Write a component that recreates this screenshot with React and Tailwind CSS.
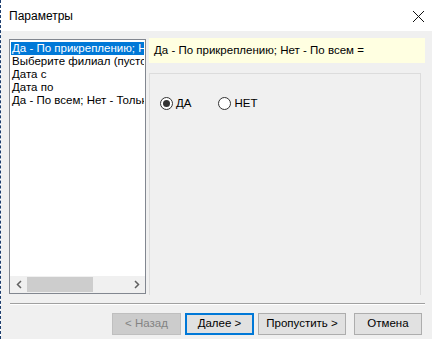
import React, { useState } from 'react';

const items = [
  'Да - По прикреплению; Нет - По всем =',
  'Выберите филиал (пусто - все)',
  'Дата с',
  'Дата по',
  'Да - По всем; Нет - Только свои',
];

const Radio = ({ checked, label, onClick }) => (
  <button type="button" onClick={onClick} className="flex items-center gap-[3px]">
    <span className="w-[13px] h-[13px] rounded-full border border-[#333333] bg-white flex items-center justify-center">
      {checked && <span className="w-[7px] h-[7px] rounded-full bg-[#333333]"></span>}
    </span>
    <span className="text-[11.5px] leading-[13px] text-black">{label}</span>
  </button>
);

const Button = ({ children, disabled, primary, className = '' }) => (
  <button
    type="button"
    disabled={disabled}
    className={`h-[22px] text-[11.5px] flex items-center justify-center ${
      disabled
        ? 'bg-[#cccccc] border border-[#bfbfbf] text-[#838383]'
        : primary
        ? 'bg-[#e1e1e1] border-2 border-[#0078d7] text-black'
        : 'bg-[#e1e1e1] border border-[#adadad] text-black'
    } ${className}`}
  >
    {children}
  </button>
);

const App = () => {
  const [selected, setSelected] = useState(0);
  const [yes, setYes] = useState(true);

  return (
    <div
      className="w-[432px] h-[339px] flex flex-col overflow-hidden border-l border-dashed border-[#1c3d6e]"
      style={{ fontFamily: '"Liberation Sans", Arial, sans-serif' }}
    >
      {/* заголовок окна */}
      <div className="h-[31px] bg-white flex items-center justify-between pl-[8px] pr-[7px] shrink-0">
        <span className="text-[12px] text-black">Параметры</span>
        <svg width="13" height="13" viewBox="0 0 13 13" className="mt-[1px]">
          <path d="M1 1 L12 12 M12 1 L1 12" stroke="#111" strokeWidth="1" fill="none" />
        </svg>
      </div>

      <div className="flex-1 bg-[#f0f0f0] flex flex-col pt-[7px] pl-[8px] pr-[7px]">
        <div className="flex items-start">
          {/* список параметров */}
          <div className="mt-px w-[137px] h-[255px] bg-white border border-[#828790] flex flex-col">
            <div className="flex-1 overflow-hidden pt-[2px] px-px">
              {items.map((it, i) => (
                <div
                  key={i}
                  onClick={() => setSelected(i)}
                  className={`h-[13px] leading-[13px] text-[11.5px] whitespace-nowrap overflow-hidden pl-[1px] ${
                    selected === i ? 'bg-[#0078d7] text-white' : 'text-black'
                  }`}
                >
                  {it}
                </div>
              ))}
            </div>
            <div className="h-[17px] bg-[#f0f0f0] flex items-center">
              <span className="w-[17px] flex justify-center">
                <svg width="6" height="9" viewBox="0 0 6 9">
                  <path d="M5 1 L1.5 4.5 L5 8" stroke="#606060" strokeWidth="1.5" fill="none" />
                </svg>
              </span>
              <span className="w-[66px] h-[15px] bg-[#cdcdcd]"></span>
              <span className="flex-1"></span>
              <span className="w-[17px] flex justify-center">
                <svg width="6" height="9" viewBox="0 0 6 9">
                  <path d="M1 1 L4.5 4.5 L1 8" stroke="#606060" strokeWidth="1.5" fill="none" />
                </svg>
              </span>
            </div>
          </div>

          {/* правая часть */}
          <div className="flex-1 ml-[3px] flex flex-col">
            <div className="h-[25px] bg-[#ffffe1] flex items-center pl-[5px] text-[11.5px] text-black">
              Да - По прикреплению; Нет - По всем =
            </div>
            <div className="mt-[10px] mr-[4px] h-[222px] border-t border-l border-r border-[#dcdcdc] flex items-start pt-[23px] pl-[10px] gap-[27px]">
              <Radio checked={yes} label="ДА" onClick={() => setYes(true)} />
              <Radio checked={!yes} label="НЕТ" onClick={() => setYes(false)} />
            </div>
          </div>
        </div>

        {/* разделитель */}
        <div className="mt-[8px] ml-px border-t border-[#a0a0a0] border-b border-b-white"></div>

        {/* кнопки */}
        <div className="flex justify-end items-center mt-[8px] gap-[4px] pr-[3px]">
          <Button disabled className="w-[69px]">&lt; Назад</Button>
          <Button primary className="w-[69px]">Далее &gt;</Button>
          <Button className="w-[88px]">Пропустить &gt;</Button>
          <Button className="w-[68px] ml-[4px]">Отмена</Button>
        </div>
      </div>
    </div>
  );
};

export default App;
